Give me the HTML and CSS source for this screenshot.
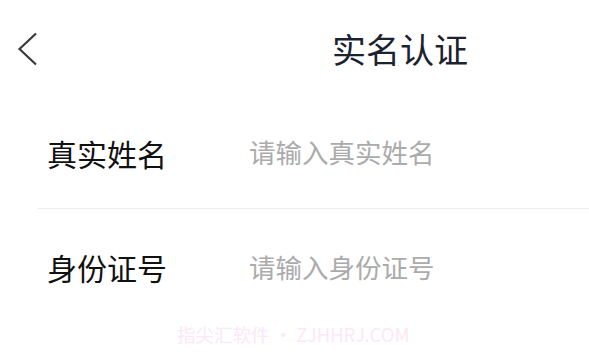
FILE: index.html
```html
<!DOCTYPE html>
<html lang="zh-CN">
<head>
<meta charset="utf-8">
<title>实名认证</title>
<link rel="stylesheet" href="styles.css">
</head>
<body>
<div class="page">
  <header class="header">
    <svg class="back" width="22" height="34" viewBox="0 0 22 34">
      <polyline points="19,1.5 2.5,17 19,32.5" fill="none" stroke="#3a3a3a" stroke-width="2.2" stroke-linejoin="miter"/>
    </svg>
    <h1 class="title">实名认证</h1>
  </header>
  <div class="form">
    <div class="row row-first">
      <span class="label">真实姓名</span>
      <span class="placeholder">请输入真实姓名</span>
    </div>
    <div class="row row-second">
      <span class="label">身份证号</span>
      <span class="placeholder">请输入身份证号</span>
    </div>
  </div>
  <div class="watermark">指尖汇软件 • ZJHHRJ.COM</div>
</div>
</body>
</html>
```
FILE: styles.css
```css
html, body {
  margin: 0;
  padding: 0;
  background: #ffffff;
}
body {
  font-family: "Noto Sans CJK SC", "Noto Sans", sans-serif;
}
.page {
  position: relative;
  width: 589px;
  height: 358px;
  overflow: hidden;
}
.header {
  height: 97px;
  display: flex;
  align-items: center;
  padding-left: 17px;
}
.back {
  display: block;
  flex: none;
}
.title {
  margin: 0 0 0 293px;
  font-size: 34px;
  line-height: 1;
  font-weight: 400;
  color: #1c2230;
}
.form {
  margin-left: 38px;
}
.row {
  display: flex;
  align-items: center;
}
.row-first {
  height: 111px;
  border-bottom: 1px solid #ececec;
}
.row-second {
  height: 116px;
}
.label {
  width: 211px;
  padding-left: 9px;
  box-sizing: border-box;
  font-size: 30px;
  line-height: 1;
  color: #111111;
}
.placeholder {
  font-size: 26.5px;
  line-height: 1;
  color: #ababab;
}
.watermark {
  position: absolute;
  left: 177px;
  top: 325px;
  font-size: 18.5px;
  line-height: 1;
  color: #fce8f6;
  white-space: nowrap;
}
```
